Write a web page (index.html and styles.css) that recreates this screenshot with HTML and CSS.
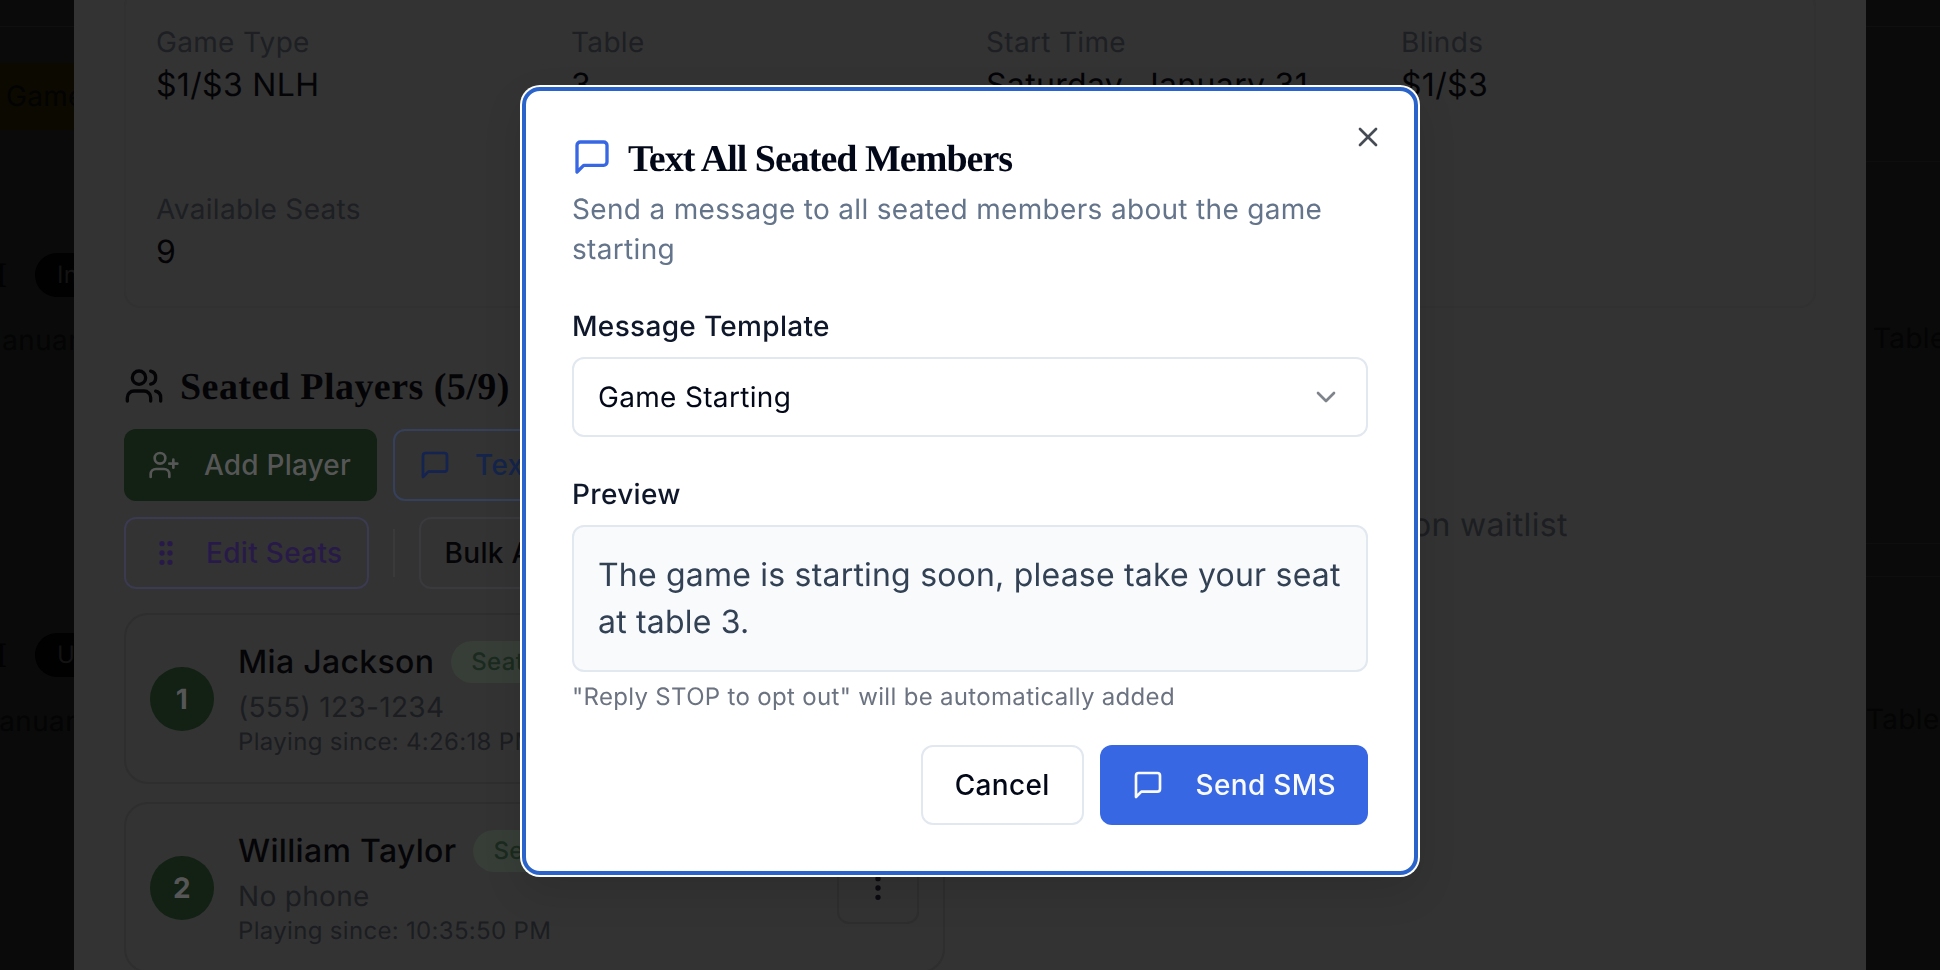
FILE: index.html
```html
<!DOCTYPE html>
<html lang="en">
<head>
<meta charset="utf-8">
<title>Text All Seated Members</title>
<link rel="stylesheet" href="styles.css">
</head>
<body>
<div class="page">
  <aside class="gutter gutter-left">
    <div class="line-27"></div>
    <div class="banner">Game</div>
    <div class="bg-row bg-row-1"><span class="bg-i">I</span><span class="bg-pill">In Progress</span></div>
    <div class="bg-date bg-date-1">January 31</div>
    <div class="bg-row bg-row-2"><span class="bg-i">I</span><span class="bg-pill">Upcoming</span></div>
    <div class="bg-date bg-date-2">January 31</div>
  </aside>

  <main class="sheet">
    <section class="info-card">
      <div class="info-item"><div class="info-label">Game Type</div><div class="info-value">$1/$3 NLH</div></div>
      <div class="info-item"><div class="info-label">Table</div><div class="info-value">3</div></div>
      <div class="info-item"><div class="info-label">Start Time</div><div class="info-value">Saturday, January 31<br>8:00 PM</div></div>
      <div class="info-item"><div class="info-label">Blinds</div><div class="info-value">$1/$3</div></div>
      <div class="info-item"><div class="info-label">Available Seats</div><div class="info-value">9</div></div>
    </section>

    <div class="columns">
      <section class="seated">
        <h2 class="section-title">
          <svg class="icon-40" viewBox="0 0 24 24"><path d="M16 21v-2a4 4 0 0 0-4-4H6a4 4 0 0 0-4 4v2"/><circle cx="9" cy="7" r="4"/><path d="M22 21v-2a4 4 0 0 0-3-3.87"/><path d="M16 3.13a4 4 0 0 1 0 7.75"/></svg>
          <span>Seated Players (5/9)</span>
        </h2>
        <div class="actions">
          <button class="btn btn-add">
            <svg class="icon-32" viewBox="0 0 24 24"><path d="M16 21v-2a4 4 0 0 0-4-4H6a4 4 0 0 0-4 4v2"/><circle cx="9" cy="7" r="4"/><path d="M19 8v6"/><path d="M22 11h-6"/></svg>
            Add Player
          </button>
          <button class="btn btn-text">
            <svg class="icon-32" viewBox="0 0 24 24"><path d="M21 15a2 2 0 0 1-2 2H7l-4 4V5a2 2 0 0 1 2-2h14a2 2 0 0 1 2 2z"/></svg>
            Text All
          </button>
        </div>
        <div class="actions actions-2">
          <button class="btn btn-edit">
            <svg class="icon-32" viewBox="0 0 24 24"><circle cx="9" cy="5" r="1"/><circle cx="9" cy="12" r="1"/><circle cx="9" cy="19" r="1"/><circle cx="15" cy="5" r="1"/><circle cx="15" cy="12" r="1"/><circle cx="15" cy="19" r="1"/></svg>
            Edit Seats
          </button>
          <span class="divider"></span>
          <button class="btn btn-bulk">Bulk Actions</button>
        </div>

        <article class="player">
          <div class="seat">1</div>
          <div class="player-body">
            <div class="player-head"><span class="player-name">Mia Jackson</span><span class="badge">Seated</span></div>
            <div class="player-phone">(555) 123-1234</div>
            <div class="player-since">Playing since: 4:26:18 PM</div>
          </div>
          <button class="kebab"><svg class="icon-32" viewBox="0 0 24 24"><circle cx="12" cy="5" r="1"/><circle cx="12" cy="12" r="1"/><circle cx="12" cy="19" r="1"/></svg></button>
        </article>
        <article class="player">
          <div class="seat">2</div>
          <div class="player-body">
            <div class="player-head"><span class="player-name">William Taylor</span><span class="badge">Seated</span></div>
            <div class="player-phone">No phone</div>
            <div class="player-since">Playing since: 10:35:50 PM</div>
          </div>
          <button class="kebab"><svg class="icon-32" viewBox="0 0 24 24"><circle cx="12" cy="5" r="1"/><circle cx="12" cy="12" r="1"/><circle cx="12" cy="19" r="1"/></svg></button>
        </article>
      </section>
      <section class="waitlist">
        <p class="waitlist-empty">No players on waitlist</p>
      </section>
    </div>
  </main>

  <aside class="gutter gutter-right">
    <div class="line-27"></div>
    <div class="line-163"></div>
    <div class="bg-table bg-table-1">Table 3</div>
    <div class="line-545"></div>
    <div class="line-578"></div>
    <div class="bg-table bg-table-2">Table 1</div>
  </aside>
</div>

<div class="overlay">
  <div class="modal" role="dialog">
    <button class="close" aria-label="Close">
      <svg class="icon-32" viewBox="0 0 24 24"><path d="M18 6 6 18"/><path d="m6 6 12 12"/></svg>
    </button>
    <h1 class="modal-title">
      <svg class="icon-40" viewBox="0 0 24 24"><path d="M21 15a2 2 0 0 1-2 2H7l-4 4V5a2 2 0 0 1 2-2h14a2 2 0 0 1 2 2z"/></svg>
      <span>Text All Seated Members</span>
    </h1>
    <p class="modal-desc">Send a message to all seated members about the game starting</p>

    <label class="field-label field-first">Message Template</label>
    <div class="select">
      <span>Game Starting</span>
      <svg class="icon-32" viewBox="0 0 24 24"><path d="m6 9 6 6 6-6"/></svg>
    </div>

    <label class="field-label field-second">Preview</label>
    <div class="preview">The game is starting soon, please take your seat at table 3.</div>
    <p class="hint">"Reply STOP to opt out" will be automatically added</p>

    <div class="modal-actions">
      <button class="mbtn mbtn-cancel">Cancel</button>
      <button class="mbtn mbtn-send">
        <svg class="icon-32" viewBox="0 0 24 24"><path d="M21 15a2 2 0 0 1-2 2H7l-4 4V5a2 2 0 0 1 2-2h14a2 2 0 0 1 2 2z"/></svg>
        Send SMS
      </button>
    </div>
  </div>
</div>
</body>
</html>
```

FILE: styles.css
```css
* { box-sizing: border-box; }
html, body { margin: 0; padding: 0; height: 970px; overflow: hidden; }
body {
  background: #0a0a0a;
  font-family: Inter, "Liberation Sans", sans-serif;
  font-size: 28px;
  letter-spacing: 0.32px;
  text-rendering: geometricPrecision;
  -webkit-font-smoothing: antialiased;
}
h1, h2, p { margin: 0; font-weight: inherit; font-size: inherit; }
button { font: inherit; letter-spacing: inherit; background: none; padding: 0; cursor: default; }
svg { display: block; flex: none; fill: none; stroke: currentColor; stroke-width: 2; stroke-linecap: round; stroke-linejoin: round; }
.icon-40 { width: 40px; height: 40px; }
.icon-32 { width: 32px; height: 32px; }

.page { display: flex; height: 970px; overflow: hidden; }

/* page behind the sheet */
.gutter { width: 74px; flex: none; overflow: hidden; color: #040404; white-space: nowrap; }
.line-27 { height: 27px; border-bottom: 1px solid #0f0f0f; }
.banner { height: 67px; margin-top: 36px; padding-left: 6px; line-height: 67px; background: #0c0901; color: #030303; }
.bg-row { display: flex; align-items: center; height: 44px; margin-left: -7px; }
.bg-row-1 { margin-top: 123px; }
.bg-row-2 { margin-top: 273px; }
.bg-i { width: 42px; flex: none; font-family: "Liberation Serif", serif; font-weight: 700; font-size: 36px; color: #020202; }
.bg-pill { flex: none; height: 44px; padding: 0 22px; line-height: 44px; border-radius: 22px; background: #010101; color: #131313; font-size: 24px; }
.bg-date { height: 40px; line-height: 40px; }
.bg-date-1 { margin-top: 23px; margin-left: -14px; }
.bg-date-2 { margin-top: 24px; margin-left: -17px; }
.line-163 { height: 135px; border-bottom: 1px solid #0e0e0e; }
.bg-table { height: 40px; line-height: 40px; }
.bg-table-1 { margin-top: 156px; padding-left: 7px; }
.bg-table-2 { margin-top: 122px; }
.line-545 { height: 186px; border-bottom: 1px solid #0e0e0e; }
.line-578 { height: 33px; border-bottom: 1px solid #0e0e0e; }

/* sheet */
.sheet { width: 1792px; flex: none; height: 970px; overflow: hidden; background: #333333; padding: 0 50px; }
.info-card {
  display: grid;
  grid-template-columns: repeat(4, 383px);
  column-gap: 32px;
  row-gap: 31px;
  margin-top: -10px;
  padding: 30px;
  border: 2px solid #313131;
  border-radius: 16px;
  height: 318px;
}
.info-label { height: 40px; line-height: 40px; color: #1d1f23; }
.info-value { margin-top: -1px; font-size: 32px; line-height: 48px; color: #040407; }

.columns { display: flex; gap: 32px; }
.seated { width: 821px; flex: none; }
.section-title { display: flex; align-items: center; gap: 16px; height: 40px; margin-top: 58px; color: #040407; font-family: "Liberation Serif", serif; font-weight: 700; font-size: 38px; letter-spacing: 0.45px; }
.section-title span { padding-top: 2px; }
.actions { display: flex; gap: 16px; margin-top: 23px; }
.actions-2 { align-items: center; margin-top: 16px; gap: 24px; }
.btn { display: flex; align-items: center; gap: 24px; height: 72px; padding: 0 24px; border: 2px solid transparent; border-radius: 12px; font-weight: 500; white-space: nowrap; }
.btn-add { padding-left: 22px; background: #122114; color: #565656; letter-spacing: 0.2px; }
.btn-text { border-color: #36405a; color: #14244a; width: 480px; }
.btn-text svg { color: #14234f; }
.btn-edit { border-color: #3a3a50; color: #281a48; }
.divider { width: 2px; height: 48px; background: #3a3a3a; }
.btn-bulk { border-color: #3a3a3e; color: #050508; width: 240px; }

.player { display: flex; align-items: center; gap: 24px; height: 171px; margin-top: 24px; padding: 0 24px; border: 2px solid #2e2e2e; border-radius: 24px; }
.player + .player { margin-top: 18px; }
.seat { width: 64px; height: 64px; flex: none; border-radius: 50%; background: #122114; color: #565656; font-weight: 700; text-align: center; line-height: 64px; }
.player-body { flex: 1; min-width: 0; }
.player-head { display: flex; align-items: center; gap: 17px; height: 44px; }
.player-name { font-size: 32px; font-weight: 500; color: #050508; }
.badge { height: 42px; padding: 0 20px; line-height: 42px; border-radius: 21px; background: #373e38; color: #1b2a1e; font-size: 24px; font-weight: 500; }
.player-phone { height: 44px; margin-top: 1px; line-height: 44px; color: #1b1d21; }
.player-since { margin-top: -3px; font-size: 24px; line-height: 32px; color: #1b1d21; }
.kebab { display: flex; align-items: center; justify-content: center; width: 82px; height: 72px; flex: none; border: 2px solid #2e2e2e; border-radius: 12px; color: #0a0a10; }

.waitlist { flex: 1; }
.waitlist-empty { margin-top: 197px; padding-left: 12px; text-align: center; font-size: 32px; color: #1c1e22; }

/* dialog */
.overlay { position: fixed; inset: 0; display: flex; justify-content: center; align-items: flex-start; padding-top: 87px; }
.modal {
  position: relative;
  width: 896px;
  height: 788px;
  padding: 46px;
  background: #ffffff;
  border: 4px solid #2a63c9;
  border-radius: 18px;
  box-shadow: 0 0 0 2px #ffffff, 0 16px 40px rgba(0, 0, 0, 0.12);
}
.close { position: absolute; top: 30px; right: 30px; width: 32px; height: 32px; border: 0; color: #464c56; }
.modal-title { display: flex; align-items: center; gap: 16px; height: 40px; color: #020817; font-family: "Liberation Serif", serif; font-weight: 700; font-size: 38px; letter-spacing: -1px; white-space: nowrap; }
.modal-title span { padding-top: 3px; }
.modal-title svg { color: #3867e4; }
.modal-desc { margin-top: 12px; line-height: 40px; color: #64748b; }
.field-label { display: block; height: 40px; line-height: 40px; font-weight: 500; color: #0f172a; }
.field-first { margin-top: 37px; }
.field-second { margin-top: 37px; }
.select { display: flex; align-items: center; justify-content: space-between; height: 80px; margin-top: 11px; padding: 0 24px; border: 2px solid #e2e8f0; border-radius: 12px; color: #020817; }
.select svg { color: #7f838b; }
.preview { height: 147px; margin-top: 11px; padding: 24px 0 24px 24px; background: #f8fafc; border: 2px solid #e2e8f0; border-radius: 12px; font-size: 32px; line-height: 47px; letter-spacing: 0.2px; color: #334155; }
.hint { margin-top: 9px; font-size: 24px; line-height: 32px; color: #6b7280; }
.modal-actions { display: flex; justify-content: flex-end; gap: 16px; margin-top: 32px; }
.mbtn { display: flex; align-items: center; height: 80px; padding: 0 32px; border-radius: 12px; font-weight: 500; border: 0; }
.mbtn-cancel { background: #fff; border: 2px solid #e2e8f0; color: #020817; }
.mbtn-send { gap: 32px; background: #3867e4; color: #f8fafc; }
```
